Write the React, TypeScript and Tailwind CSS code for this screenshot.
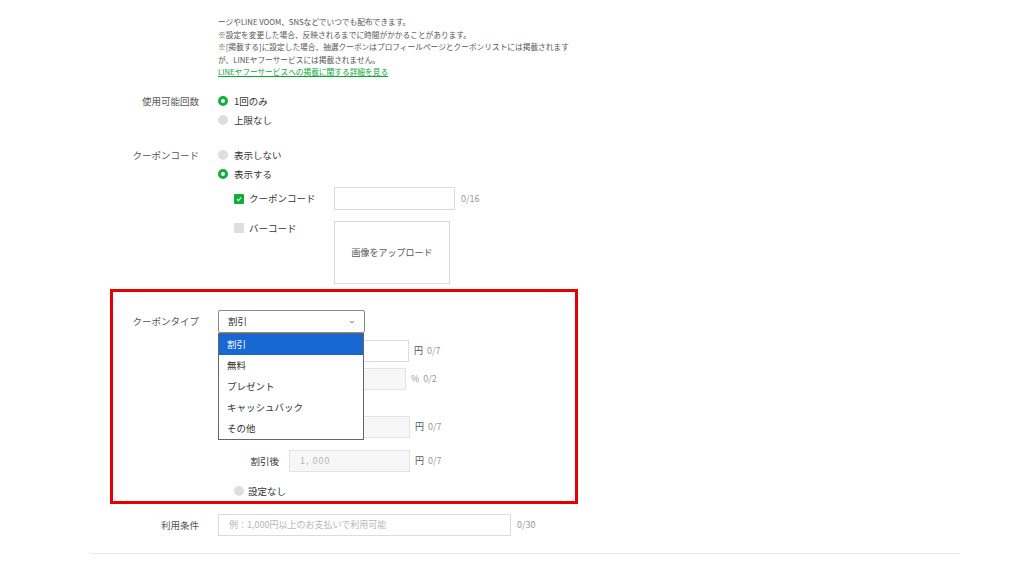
import React from "react";

const Radio = ({ on }: { on?: boolean }) =>
  on ? (
    <span className="inline-block h-[10px] w-[10px] shrink-0 rounded-full border-[3px] border-[#0fb03a] bg-white" />
  ) : (
    <span className="inline-block h-[10px] w-[10px] shrink-0 rounded-full bg-[#dedede]" />
  );

const Check = ({ on }: { on?: boolean }) =>
  on ? (
    <span className="flex h-[10px] w-[10px] shrink-0 items-center justify-center rounded-[1px] bg-[#0fb03a]">
      <svg viewBox="0 0 10 10" className="h-[8px] w-[8px]">
        <path d="M2.5 5.2 L4.3 7 L7.6 3.2" fill="none" stroke="white" strokeWidth="1.4" />
      </svg>
    </span>
  ) : (
    <span className="inline-block h-[10px] w-[10px] shrink-0 rounded-[1px] bg-[#dedede]" />
  );

const Option = ({ on, label, gap = "gap-[6px]" }: { on?: boolean; label: string; gap?: string }) => (
  <div className={`flex h-[19px] items-center ${gap}`}>
    <Radio on={on} />
    <span>{label}</span>
  </div>
);

const Counter = ({ unit, count }: { unit: string; count: string }) => (
  <span className="ml-[5px] text-[9px]">
    <span className={unit === "円" ? "text-[#555]" : "text-[#999]"}>{unit}</span>
    <span className="ml-[4px] text-[#999]">{count}</span>
  </span>
);

const options = ["割引", "無料", "プレゼント", "キャッシュバック", "その他"];

export default function App() {
  return (
    <div className="h-[578px] w-[1024px] overflow-hidden bg-white font-['Noto_Sans_CJK_JP','Liberation_Sans',sans-serif] text-[9.5px] text-[#333]">
      <div className="ml-[90px] w-[870px]">
        {/* notes */}
        <div className="pl-[128px] pt-[16px] text-[7.7px] leading-[12.5px] text-[#555]">
          <p>ージやLINE VOOM、SNSなどでいつでも配布できます。</p>
          <p>※設定を変更した場合、反映されるまでに時間がかかることがあります。</p>
          <p>※[掲載する]に設定した場合、抽選クーポンはプロフィールページとクーポンリストには掲載されます</p>
          <p>が、LINEヤフーサービスには掲載されません。</p>
          <p>
            <a className="text-[#0aa83a] underline">LINEヤフーサービスへの掲載に関する詳細を見る</a>
          </p>
        </div>

        {/* 使用可能回数 */}
        <div className="mt-[13px] flex">
          <div className="w-[128px] pr-[19px] text-right leading-[19px] text-[#555]">使用可能回数</div>
          <div>
            <Option on label="1回のみ" />
            <Option label="上限なし" />
          </div>
        </div>

        {/* クーポンコード */}
        <div className="mt-[16px] flex">
          <div className="w-[128px] pr-[19px] text-right leading-[19px] text-[#555]">クーポンコード</div>
          <div>
            <Option label="表示しない" />
            <Option on label="表示する" />
            <div className="mt-[3.5px] flex items-center pl-[16px]">
              <div className="flex w-[100px] items-center gap-[5px]">
                <Check on />
                <span>クーポンコード</span>
              </div>
              <div className="h-[23px] w-[121px] border border-[#dcdcdc] bg-white" />
              <span className="ml-[6px] text-[9px] text-[#999]">0/16</span>
            </div>
            <div className="mt-[11px] flex items-start pl-[16px]">
              <div className="flex w-[100px] items-center gap-[5px] pt-[1px] leading-[12px]">
                <Check />
                <span>バーコード</span>
              </div>
              <div className="flex h-[63px] w-[116px] items-center justify-center border border-[#dcdcdc] text-[9px] text-[#555]">
                画像をアップロード
              </div>
            </div>
          </div>
        </div>

        {/* クーポンタイプ (highlighted) */}
        <div className="ml-[20px] mt-[5px] w-[468px] border-[3px] border-[#e60000] pt-[18px]">
          <div className="flex">
            <div className="w-[105px] pr-[19px] text-right leading-[23px] text-[#555]">クーポンタイプ</div>
            <div>
              <div className="relative w-[147px]">
                <div className="flex h-[23px] items-center justify-between rounded-[2px] border border-[#8a8a8a] bg-white pl-[9px] pr-[9px]">
                  <span>割引</span>
                  <svg viewBox="0 0 10 10" className="h-[6px] w-[6px]">
                    <path d="M2 3.5 L5 6.5 L8 3.5" fill="none" stroke="#555" strokeWidth="1.5" />
                  </svg>
                </div>
                <div className="absolute left-0 top-[23px] z-10 w-[146px] border border-[#666] bg-white">
                  {options.map((o, i) => (
                    <div
                      key={o}
                      className={`flex h-[21px] items-center pl-[8px] ${i === 0 ? "bg-[#1967d2] text-white" : "text-[#333]"}`}
                    >
                      {o}
                    </div>
                  ))}
                </div>
              </div>

              <div className="pl-[16px]">
                <div className="mt-[7px] flex items-center">
                  <div className="w-[55px]" />
                  <div className="h-[22px] w-[120px] border border-[#dcdcdc] bg-white" />
                  <Counter unit="円" count="0/7" />
                </div>
                <div className="mt-[6px] flex items-center">
                  <div className="w-[55px]" />
                  <div className="h-[22px] w-[117px] border border-[#e3e3e3] bg-[#f7f7f7]" />
                  <Counter unit="%" count="0/2" />
                </div>
                <div className="h-[26px]" />
                <div className="flex items-center">
                  <div className="w-[55px]" />
                  <div className="h-[22px] w-[121px] border border-[#e3e3e3] bg-[#f7f7f7]" />
                  <Counter unit="円" count="0/7" />
                </div>
                <div className="mt-[12px] flex items-center">
                  <div className="w-[55px] pr-[10px] text-right">割引後</div>
                  <div className="flex h-[22px] w-[121px] items-center border border-[#e3e3e3] bg-[#f7f7f7] pl-[10px] text-[9px] tracking-[1px] text-[#b5b5b5]">
                    1, 000
                  </div>
                  <Counter unit="円" count="0/7" />
                </div>
                <div className="mt-[9.5px]">
                  <Option label="設定なし" gap="gap-[4px]" />
                </div>
              </div>
            </div>
          </div>
        </div>

        {/* 利用条件 */}
        <div className="mt-[10.5px] flex items-center">
          <div className="w-[128px] pr-[19px] text-right text-[#555]">利用条件</div>
          <div className="flex h-[22px] w-[293px] items-center border border-[#dcdcdc] pl-[10px] text-[9px] text-[#b8b8b8]">
            例：1,000円以上のお支払いで利用可能
          </div>
          <span className="ml-[6px] text-[9px] text-[#999]">0/30</span>
        </div>

        <div className="mt-[17px] border-t border-[#e8e8e8]" />
      </div>
    </div>
  );
}
